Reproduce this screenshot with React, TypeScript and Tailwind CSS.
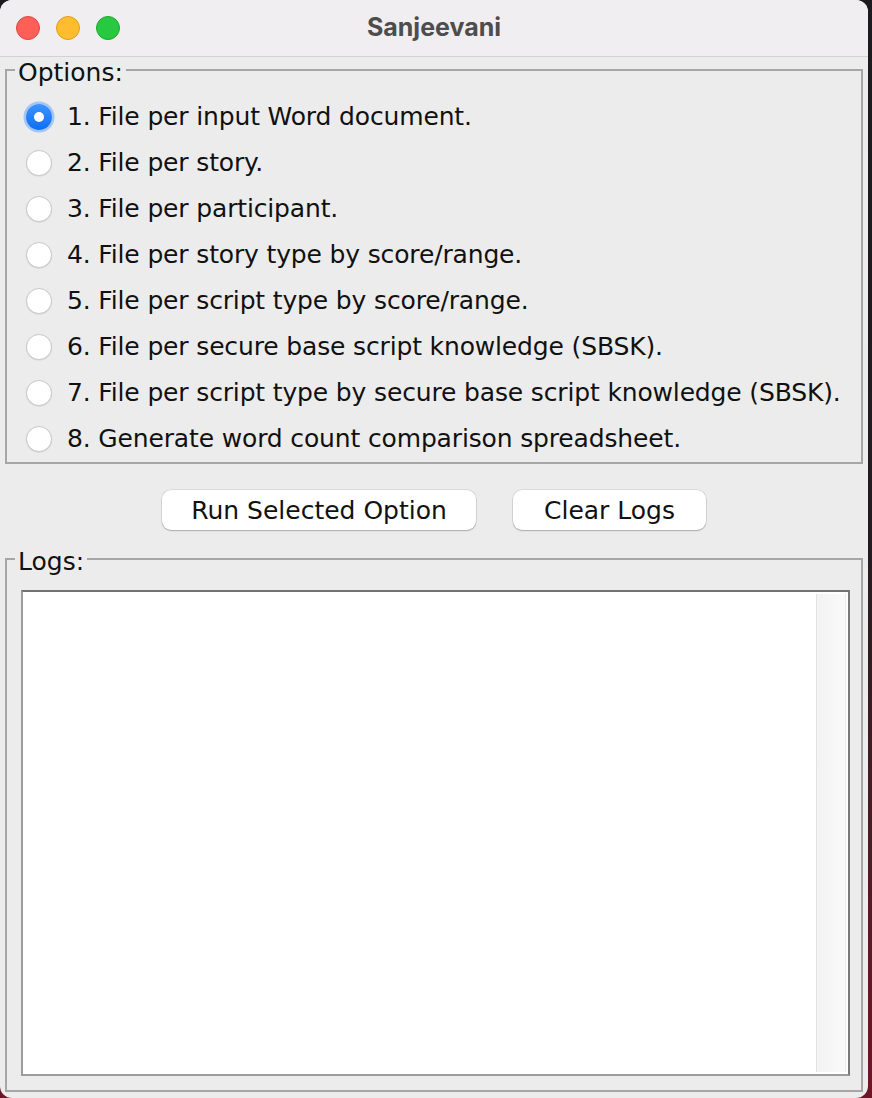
import React, { useState } from "react";

const options = [
  "1. File per input Word document.",
  "2. File per story.",
  "3. File per participant.",
  "4. File per story type by score/range.",
  "5. File per script type by score/range.",
  "6. File per secure base script knowledge (SBSK).",
  "7. File per script type by secure base script knowledge (SBSK).",
  "8. Generate word count comparison spreadsheet.",
];

function Radio({ checked }: { checked: boolean }) {
  if (checked) {
    return (
      <span className="flex items-center justify-center w-[26px] h-[26px] rounded-full bg-linear-to-b from-[#3b94ff] to-[#0a6ef5] shadow-[0_0_0_2.5px_rgba(80,150,255,0.45)]">
        <span className="w-[10px] h-[10px] rounded-full bg-white" />
      </span>
    );
  }
  return (
    <span className="w-[26px] h-[26px] rounded-full bg-white border border-[#cacaca] shadow-[0_0.5px_1px_rgba(0,0,0,0.12)]" />
  );
}

export default function App() {
  const [selected, setSelected] = useState(0);

  return (
    <div className="w-[872px] h-[1098px] bg-linear-to-b from-[#1c1a1e] via-[#241b20] to-[#6e1526] font-['DejaVu_Sans',sans-serif] text-[25px] text-[#111]">
      <div className="w-[868px] h-full rounded-[12px] overflow-hidden bg-[#ececec] flex flex-col">
        {/* title bar */}
        <div className="h-[57px] shrink-0 bg-[#f0eef1] border-b border-[#d2d2d2] flex items-center relative">
          <div className="flex items-center gap-[16px] pl-[16px]">
            <span className="w-[24px] h-[24px] rounded-full bg-[#ff5f57] border border-[#e2463f]" />
            <span className="w-[24px] h-[24px] rounded-full bg-[#febc2e] border border-[#e1a116]" />
            <span className="w-[24px] h-[24px] rounded-full bg-[#28c840] border border-[#1aab29]" />
          </div>
          <div className="absolute inset-0 flex items-center justify-center font-['Inter',sans-serif] font-bold text-[25px] text-[#4d4d4d] pointer-events-none">
            Sanjeevani
          </div>
        </div>

        <div className="flex-1 flex flex-col px-[5px]">
          <fieldset className="mt-[-3px] border-2 border-[#a6a6a6]">
            <legend className="ml-[8px] px-[3px] pt-[6px] leading-[26px]">Options:</legend>
            <div className="pl-[19px] pt-[8px]">
              {options.map((label, i) => (
                <div
                  key={label}
                  className="h-[46px] flex items-center gap-[15px] cursor-default"
                  onClick={() => setSelected(i)}
                >
                  <Radio checked={selected === i} />
                  <span className="leading-[46px] whitespace-nowrap tracking-[-0.15px]">{label}</span>
                </div>
              ))}
            </div>
          </fieldset>

          <div className="mt-[26px] flex justify-center gap-[37px]">
            <button className="w-[314px] h-[40px] rounded-[9px] bg-white shadow-[0_0_0_0.5px_rgba(0,0,0,0.14),0_1px_1.5px_rgba(0,0,0,0.22)] leading-none">
              Run Selected Option
            </button>
            <button className="w-[193px] h-[40px] rounded-[9px] bg-white shadow-[0_0_0_0.5px_rgba(0,0,0,0.14),0_1px_1.5px_rgba(0,0,0,0.22)] leading-none">
              Clear Logs
            </button>
          </div>

          <fieldset className="mt-[13px] border-2 border-[#a6a6a6]">
            <legend className="ml-[8px] px-[3px] pt-[6px] leading-[26px]">Logs:</legend>
            <div className="pl-[14px] pr-[11px] pt-[15px] pb-[14px]">
              <div className="h-[486px] bg-white border-2 border-[#9c9c9c] border-t-[#727272] border-r-[#7a7a7a] flex">
                <div className="flex-1" />
                <div className="w-[30px] my-[2px] mr-[2px] bg-linear-to-r from-[#f3f3f3] to-[#fafafa] border-l border-[#e2e2e2] border-r border-r-[#ececec]" />
              </div>
            </div>
          </fieldset>
        </div>
      </div>
    </div>
  );
}
